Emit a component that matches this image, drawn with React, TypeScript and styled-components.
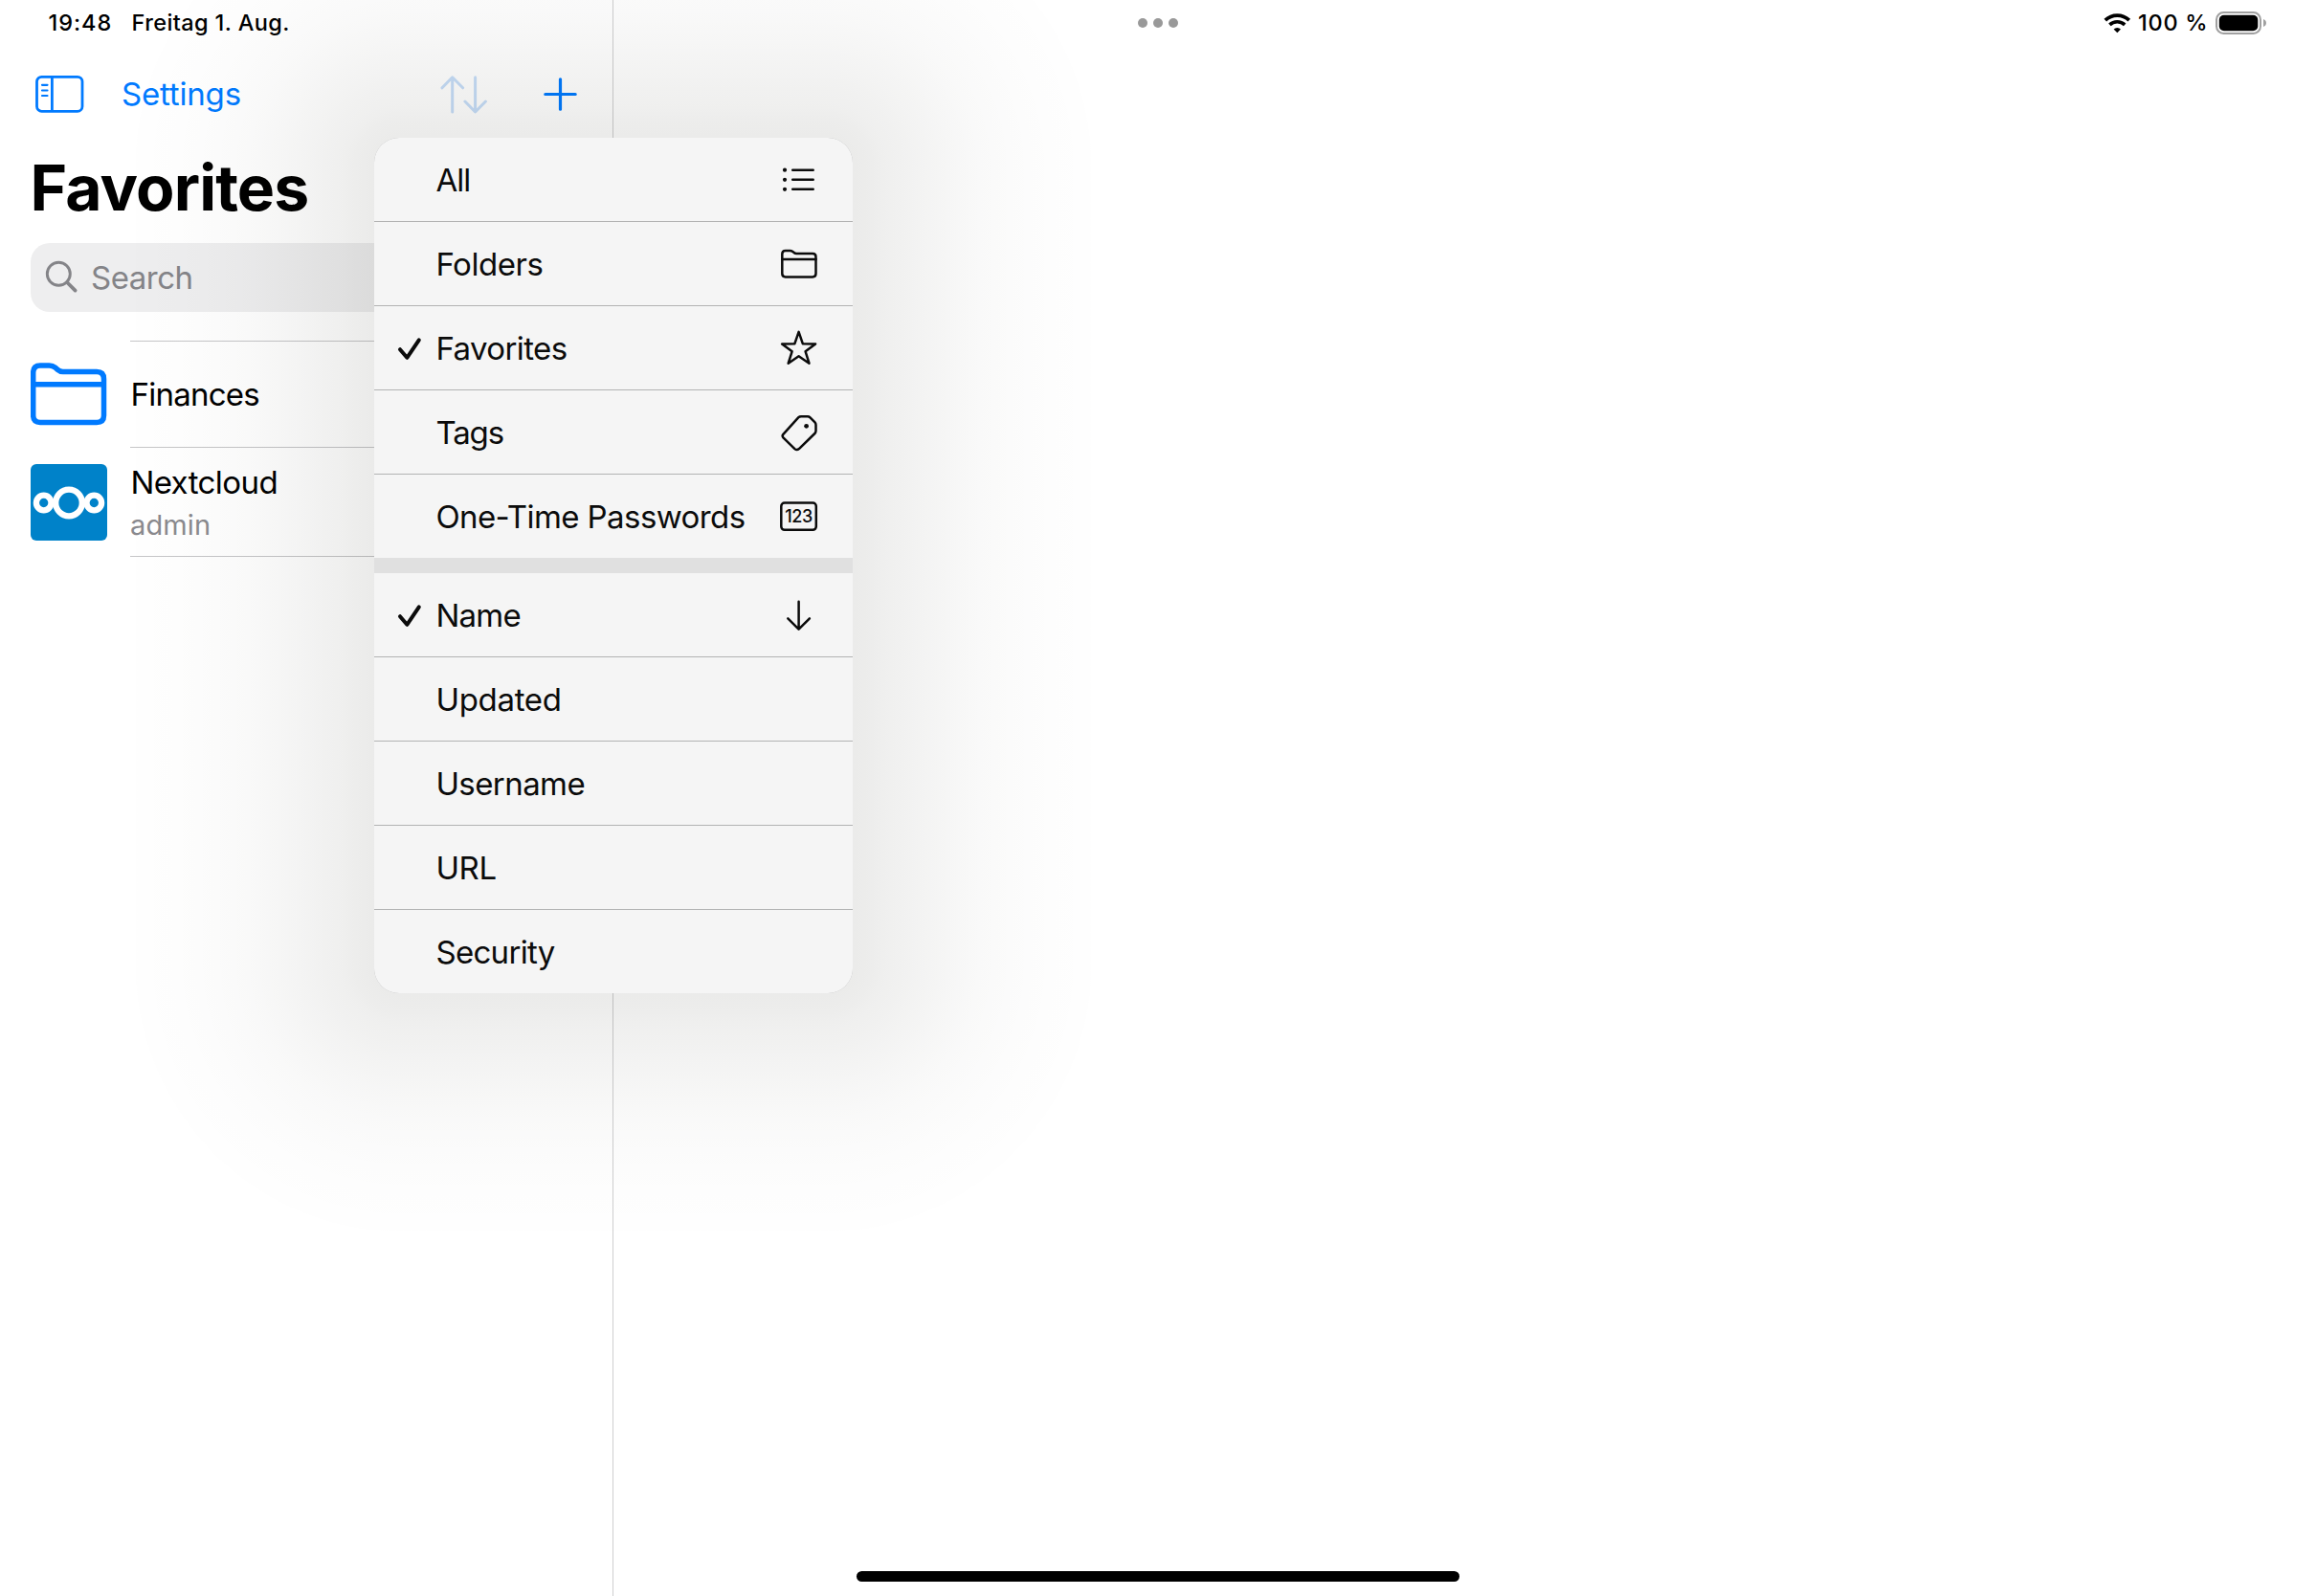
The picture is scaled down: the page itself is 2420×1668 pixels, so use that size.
import React from "react";
import styled, { createGlobalStyle } from "styled-components";

const GlobalStyle = createGlobalStyle`
  html, body {
    margin: 0;
    background: #fff;
  }
  body {
    font-family: Inter, "Liberation Sans", sans-serif;
    color: #000;
    overflow: hidden;
  }
  svg {
    display: block;
    flex: none;
  }
`;

const Screen = styled.div`
  position: relative;
  display: flex;
  width: 2420px;
  height: 1668px;
  background: #fff;
  overflow: hidden;
`;

const StatusBar = styled.header`
  position: absolute;
  inset: 0 0 auto 0;
  z-index: 1;
  display: grid;
  grid-template-columns: 1fr auto 1fr;
  align-items: center;
  height: 47px;
  padding: 0 51px 0 50px;
  font-size: 23.5px;
  font-weight: 500;
  line-height: 47px;
  white-space: pre;
`;

const StatusGroup = styled.div`
  display: flex;
  align-items: center;
`;

const StatusGroupEnd = styled(StatusGroup)`
  justify-content: flex-end;
`;

const Clock = styled.span`
  width: 87px;
  padding-left: 0.5px;
  letter-spacing: 0.95px;
`;

const DateText = styled.span`
  letter-spacing: 0.4px;
`;

const BatteryText = styled.span`
  width: 80px;
  margin-left: 7px;
  letter-spacing: 0.75px;
`;

const Multitasking = styled.div`
  display: flex;
  gap: 6px;
  padding-top: 1px;
`;

const Dot = styled.i`
  width: 10px;
  height: 10px;
  border-radius: 50%;
  background: #999;
`;

const Sidebar = styled.aside`
  flex: none;
  box-sizing: border-box;
  width: 641px;
  height: 100%;
  padding-top: 48px;
  border-right: 1px solid #cfcfd0;
`;

const Detail = styled.main`
  flex: 1;
`;

const Toolbar = styled.nav`
  display: flex;
  align-items: center;
  height: 100px;
  padding: 0 37px 0 36px;
  color: #007aff;
`;

const ToolbarLink = styled.a`
  margin-left: 39px;
  font-size: 33px;
  line-height: 44px;
  letter-spacing: -0.18px;
`;

const ToolbarActions = styled.div`
  display: flex;
  align-items: center;
  gap: 57px;
  margin-left: auto;
`;

const LargeTitle = styled.h1`
  margin: 6px 32px 16px 31.5px;
  font-size: 66px;
  font-weight: 700;
  line-height: 84px;
  letter-spacing: -0.87px;
`;

const SearchField = styled.div`
  display: flex;
  align-items: center;
  height: 72px;
  margin: 0 32px 30px;
  padding-left: 14px;
  border-radius: 20px;
  background: #eeeeef;
  color: #848488;
  font-size: 33px;
  letter-spacing: -0.48px;
`;

const SearchLabel = styled.span`
  margin-left: 12px;
`;

const List = styled.ul`
  margin: 0;
  padding: 0 0 0 32px;
  list-style: none;
`;

const ListRow = styled.li`
  display: flex;
  align-items: center;
  gap: 24px;
`;

const RowBody = styled.div<{ $height: number; $first?: boolean }>`
  flex: 1;
  display: flex;
  flex-direction: column;
  justify-content: center;
  box-sizing: border-box;
  height: ${(p) => p.$height}px;
  padding-top: ${(p) => (p.$first ? 0 : 3)}px;
  border-top: ${(p) => (p.$first ? "1px solid #c6c6c8" : "none")};
  border-bottom: 1px solid #c6c6c8;
`;

const RowTitle = styled.span<{ $tracking: number }>`
  padding-left: 0.4px;
  font-size: 33px;
  line-height: 44px;
  letter-spacing: ${(p) => p.$tracking}px;
`;

const RowSubtitle = styled.span`
  padding-top: 1px;
  margin-bottom: -1px;
  color: #8a8a8e;
  font-size: 29px;
  line-height: 44px;
  letter-spacing: 0.13px;
`;

/* Distance from the inset corner (0..1) against shadow strength. */
const falloff = (
  [
    [0, 21], [0.09, 20.4], [0.15, 18.6], [0.182, 17.5], [0.218, 16.4],
    [0.246, 15.5], [0.286, 14.4], [0.318, 13.4], [0.346, 12.4], [0.379, 11.4],
    [0.414, 10.4], [0.446, 9.4], [0.479, 8.4], [0.518, 7.4], [0.55, 6.5],
    [0.593, 5.5], [0.65, 4.5], [0.711, 3.5], [0.779, 2.5], [0.864, 1.5],
    [0.996, 0.5], [1, 0],
  ] as const
)
  .map(([t, k]) => `rgba(14, 14, 0, ${(k / 241).toFixed(4)}) ${(t * 100).toFixed(1)}%`)
  .join(", ");

const MenuAnchor = styled.div`
  position: absolute;
  left: 391px;
  top: 144px;
  z-index: 2;
  width: 500px;
`;

const MenuShadow = styled.div`
  position: absolute;
  inset: -250px;
  display: grid;
  grid-template-columns: 280px 1fr 280px;
  grid-template-rows: 280px 1fr 280px;
  pointer-events: none;
`;

const ShadowCorner = styled.div<{ $at: string }>`
  background: radial-gradient(farthest-side ellipse at ${(p) => p.$at}, ${falloff});
`;

const ShadowSide = styled.div<{ $to: string }>`
  background: linear-gradient(to ${(p) => p.$to}, ${falloff});
`;

const Menu = styled.div`
  position: relative;
  display: flex;
  flex-direction: column;
  gap: 16px;
  border-radius: 26px;
  overflow: hidden;
  background: #e0e0e0;
  color: #0b0b0b;
`;

const MenuGroup = styled.div`
  display: flex;
  flex-direction: column;
  gap: 1px;
  background: #b2b3b3;
`;

const MenuRow = styled.div`
  display: grid;
  grid-template-columns: 64px 1fr 44px;
  align-items: center;
  height: 87px;
  padding-right: 34px;
  background: #f5f5f5;
`;

const MenuLabel = styled.span<{ $tracking: number }>`
  grid-column: 2;
  padding: 1px 0 0 0.4px;
  font-size: 33px;
  line-height: 44px;
  letter-spacing: ${(p) => p.$tracking}px;
  white-space: nowrap;
`;

const HomeIndicator = styled.div`
  position: absolute;
  left: 895px;
  bottom: 15px;
  width: 630px;
  height: 11px;
  border-radius: 5.5px;
  background: #000;
`;

const WifiIcon = () => (
  <svg width="29" height="22" viewBox="0 0 29 22" fill="none" stroke="#000">
    <path d="M1.8 8.1a18 18 0 0 1 25 0" strokeWidth="3.8" />
    <path d="M6.4 12.9a11.4 11.4 0 0 1 15.8 0" strokeWidth="3.6" />
    <path d="M14.3 21.2l-3.7-3.8a5.3 5.3 0 0 1 7.4 0z" fill="#000" stroke="none" />
  </svg>
);

const BatteryIcon = () => (
  <svg width="55" height="26" viewBox="0 0 55 26">
    <rect x="2" y="2" width="46" height="22" rx="7.5" fill="none" stroke="#a0a0a0" strokeWidth="2" />
    <rect x="4.8" y="4.8" width="40.5" height="16.4" rx="5" fill="#000" />
    <path d="M51 9v8c1.8-.7 3-2.2 3-4s-1.2-3.3-3-4z" fill="#a0a0a0" />
  </svg>
);

const SidebarIcon = () => (
  <svg width="52" height="40" viewBox="0 0 52 40" fill="none" stroke="currentColor" strokeWidth="2.8">
    <rect x="2.5" y="2.3" width="47.5" height="36" rx="5" />
    <path d="M18.4 2v36.5" />
    <path d="M8 10.8h5.5M8 16.5h5.5M8 22h5.5" strokeWidth="2.2" strokeLinecap="round" />
  </svg>
);

const SortIcon = () => (
  <svg width="50" height="42" viewBox="0 0 50 42" fill="none" stroke="#c6ddf8" strokeWidth="3" strokeLinecap="round" strokeLinejoin="round">
    <path d="M12.7 40V4M2 14.8L12.7 3.8 23.6 14.8" />
    <path d="M36.6 3.8v36M25.9 29L36.6 40 47.4 29" />
  </svg>
);

const PlusIcon = () => (
  <svg width="36" height="36" viewBox="0 0 36 36" fill="none" stroke="currentColor" strokeWidth="3.2" strokeLinecap="round">
    <path d="M18.5 2.8v31.4M2.8 18.5h31.4" />
  </svg>
);

const SearchIcon = () => (
  <svg width="37" height="36" viewBox="0 0 37 36" fill="none" stroke="currentColor" strokeWidth="2.9" strokeLinecap="round">
    <circle cx="15.3" cy="14.3" r="12" />
    <path d="M24 23l8.6 8.6" strokeWidth="3.8" />
  </svg>
);

const BigFolderIcon = () => (
  <svg width="80" height="80" viewBox="0 0 80 80" fill="none" stroke="#007aff" strokeWidth="5.5" strokeLinejoin="round">
    <path d="M2.7 17.5c0-5 2.6-7.5 7.3-7.5h9.5c2.600 0 4.300.6 6.200 2.200l2.500 2.200c1.700 1.500 3 2.100 5.600 2.100h35.200c5 0 7.500 2.700 7.500 7.500v38.200c0 4.800-2.500 7.200-7.500 7.200H10c-4.800 0-7.300-2.400-7.300-7.200z" />
    <path d="M3 29.800h73.500" />
  </svg>
);

const NextcloudIcon = () => (
  <svg width="80" height="80" viewBox="0 0 80 80" fill="none" stroke="#fff">
    <rect width="80" height="80" rx="6" fill="#0082c9" stroke="none" />
    <circle cx="40" cy="40.5" r="13.8" strokeWidth="6.300" />
    <circle cx="13.7" cy="40.5" r="7.8" strokeWidth="6.300" />
    <circle cx="66.3" cy="40.5" r="7.8" strokeWidth="6.300" />
  </svg>
);

const CheckIcon = () => (
  <svg width="64" height="43" viewBox="0 0 64 43" fill="none" stroke="currentColor" strokeWidth="4" strokeLinecap="round" strokeLinejoin="round">
    <path d="M27 23.200L34.300 31.800 46.800 13.400" />
  </svg>
);

const MenuGlyph = ({ children }: { children: React.ReactNode }) => (
  <svg width="44" height="43" viewBox="0 0 44 43" fill="none" stroke="currentColor" strokeWidth="2.5" strokeLinecap="round" strokeLinejoin="round">
    {children}
  </svg>
);

const ListGlyph = () => (
  <MenuGlyph>
    <path d="M15.2 11.7h21.500M15.2 21.8h21.500M15.2 31.8h21.500" />
    <g fill="currentColor" stroke="none">
      <circle cx="7" cy="11.7" r="2.1" />
      <circle cx="7" cy="21.8" r="2.1" />
      <circle cx="7" cy="31.8" r="2.1" />
    </g>
  </MenuGlyph>
);

const FolderGlyph = () => (
  <MenuGlyph>
    <path d="M4.3 11.4c0-2.3 1.2-3.5 3.4-3.5h4.7c1.2 0 2 .3 2.9 1l1.3 1.1c.8.7 1.5 1 2.7 1h16.8c2.2 0 3.4 1.2 3.4 3.4v17.7c0 2.2-1.2 3.4-3.4 3.4H7.7c-2.2 0-3.4-1.2-3.4-3.4z" />
    <path d="M4.5 17h35" />
  </MenuGlyph>
);

const StarGlyph = () => (
  <MenuGlyph>
    <path d="M21.6 4.9L25.8 17.2 39.1 17.5 28.6 25.3 32.5 37.7 21.6 30.2 10.7 37.7 14.6 25.3 4.1 17.5 17.4 17.2z" />
  </MenuGlyph>
);

const TagGlyph = () => (
  <MenuGlyph>
    <path d="M21.4 6.2Q22.5 5.2 24.1 5.2H30.8Q32.4 5.2 33.5 6.3L38.3 11.1Q39.5 12.3 39.5 13.9V20.3Q39.5 21.9 38.4 23L21.9 39.1Q19.6 40.9 17.4 39.1L5.4 27.3Q3.9 25.6 5.4 23.8z" />
    <circle cx="29.6" cy="15.3" r="2.4" fill="currentColor" stroke="none" />
  </MenuGlyph>
);

const DigitsText = styled.text`
  font: 500 18px Inter, sans-serif;
  letter-spacing: -0.4px;
`;

const DigitsGlyph = () => (
  <MenuGlyph>
    <rect x="3.3" y="7.5" width="36.5" height="28.3" rx="3.5" />
    <DigitsText x="7.2" y="28.3" fill="currentColor" stroke="none">
      123
    </DigitsText>
  </MenuGlyph>
);

const ArrowDownGlyph = () => (
  <MenuGlyph>
    <path d="M21.6 7.8v28.6M10.3 25.4L21.6 36.7 32.9 25.4" />
  </MenuGlyph>
);

type MenuItem = {
  label: string;
  tracking: number;
  checked?: boolean;
  Icon?: React.ComponentType;
};

const groups: MenuItem[][] = [
  [
    { label: "All", tracking: -0.9, Icon: ListGlyph },
    { label: "Folders", tracking: -0.47, Icon: FolderGlyph },
    { label: "Favorites", tracking: -0.59, checked: true, Icon: StarGlyph },
    { label: "Tags", tracking: -1.1, Icon: TagGlyph },
    { label: "One-Time Passwords", tracking: -0.58, Icon: DigitsGlyph },
  ],
  [
    { label: "Name", tracking: -0.77, checked: true, Icon: ArrowDownGlyph },
    { label: "Updated", tracking: -0.3 },
    { label: "Username", tracking: -0.58 },
    { label: "URL", tracking: -0.4 },
    { label: "Security", tracking: -0.68 },
  ],
];

export default function App() {
  return (
    <Screen>
      <GlobalStyle />
      <StatusBar>
        <StatusGroup>
          <Clock>19:48</Clock>
          <DateText>Freitag 1. Aug.</DateText>
        </StatusGroup>
        <Multitasking>
          <Dot />
          <Dot />
          <Dot />
        </Multitasking>
        <StatusGroupEnd>
          <WifiIcon />
          <BatteryText>100 %</BatteryText>
          <BatteryIcon />
        </StatusGroupEnd>
      </StatusBar>

      <Sidebar>
        <Toolbar>
          <SidebarIcon />
          <ToolbarLink>Settings</ToolbarLink>
          <ToolbarActions>
            <SortIcon />
            <PlusIcon />
          </ToolbarActions>
        </Toolbar>
        <LargeTitle>Favorites</LargeTitle>
        <SearchField>
          <SearchIcon />
          <SearchLabel>Search</SearchLabel>
        </SearchField>
        <List>
          <ListRow>
            <BigFolderIcon />
            <RowBody $height={112} $first>
              <RowTitle $tracking={-0.73}>Finances</RowTitle>
            </RowBody>
          </ListRow>
          <ListRow>
            <NextcloudIcon />
            <RowBody $height={114}>
              <RowTitle $tracking={-0.58}>Nextcloud</RowTitle>
              <RowSubtitle>admin</RowSubtitle>
            </RowBody>
          </ListRow>
        </List>
      </Sidebar>
      <Detail />

      <MenuAnchor>
        <MenuShadow>
          <ShadowCorner $at="100% 100%" />
          <ShadowSide $to="top" />
          <ShadowCorner $at="0% 100%" />
          <ShadowSide $to="left" />
          <div />
          <ShadowSide $to="right" />
          <ShadowCorner $at="100% 0%" />
          <ShadowSide $to="bottom" />
          <ShadowCorner $at="0% 0%" />
        </MenuShadow>
        <Menu>
          {groups.map((items, index) => (
            <MenuGroup key={index}>
              {items.map(({ label, tracking, checked, Icon }) => (
                <MenuRow key={label}>
                  {checked && <CheckIcon />}
                  <MenuLabel $tracking={tracking}>{label}</MenuLabel>
                  {Icon && <Icon />}
                </MenuRow>
              ))}
            </MenuGroup>
          ))}
        </Menu>
      </MenuAnchor>

      <HomeIndicator />
    </Screen>
  );
}
